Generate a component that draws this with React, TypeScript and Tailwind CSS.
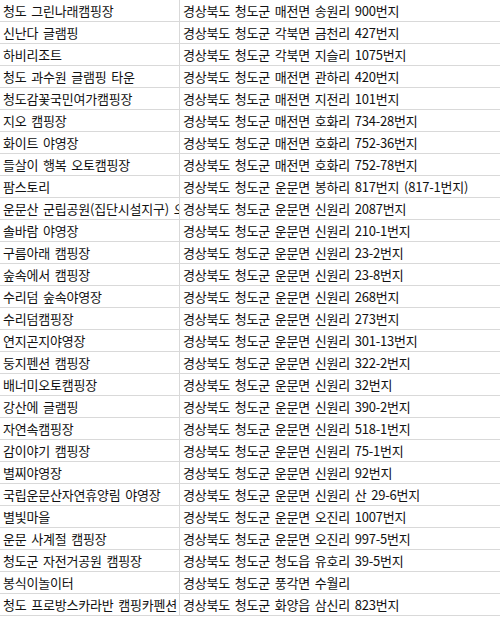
import React from "react";

const rows: [string, string][] = [
  ["청도 그린나래캠핑장", "경상북도 청도군 매전면 송원리 900번지"],
  ["신난다 글램핑", "경상북도 청도군 각북면 금천리 427번지"],
  ["하비리조트", "경상북도 청도군 각북면 지슬리 1075번지"],
  ["청도 과수원 글램핑 타운", "경상북도 청도군 매전면 관하리 420번지"],
  ["청도감꽃국민여가캠핑장", "경상북도 청도군 매전면 지전리 101번지"],
  ["지오 캠핑장", "경상북도 청도군 매전면 호화리 734-28번지"],
  ["화이트 야영장", "경상북도 청도군 매전면 호화리 752-36번지"],
  ["들살이 행복 오토캠핑장", "경상북도 청도군 매전면 호화리 752-78번지"],
  ["팜스토리", "경상북도 청도군 운문면 봉하리 817번지 (817-1번지)"],
  ["운문산 군립공원(집단시설지구) 오토캠핑장", "경상북도 청도군 운문면 신원리 2087번지"],
  ["솔바람 야영장", "경상북도 청도군 운문면 신원리 210-1번지"],
  ["구름아래 캠핑장", "경상북도 청도군 운문면 신원리 23-2번지"],
  ["숲속에서 캠핑장", "경상북도 청도군 운문면 신원리 23-8번지"],
  ["수리덤 숲속야영장", "경상북도 청도군 운문면 신원리 268번지"],
  ["수리덤캠핑장", "경상북도 청도군 운문면 신원리 273번지"],
  ["연지곤지야영장", "경상북도 청도군 운문면 신원리 301-13번지"],
  ["둥지펜션 캠핑장", "경상북도 청도군 운문면 신원리 322-2번지"],
  ["배너미오토캠핑장", "경상북도 청도군 운문면 신원리 32번지"],
  ["강산에 글램핑", "경상북도 청도군 운문면 신원리 390-2번지"],
  ["자연속캠핑장", "경상북도 청도군 운문면 신원리 518-1번지"],
  ["감이야기 캠핑장", "경상북도 청도군 운문면 신원리 75-1번지"],
  ["별찌야영장", "경상북도 청도군 운문면 신원리 92번지"],
  ["국립운문산자연휴양림 야영장", "경상북도 청도군 운문면 신원리 산 29-6번지"],
  ["별빛마을", "경상북도 청도군 운문면 오진리 1007번지"],
  ["운문 사계절 캠핑장", "경상북도 청도군 운문면 오진리 997-5번지"],
  ["청도군 자전거공원 캠핑장", "경상북도 청도군 청도읍 유호리 39-5번지"],
  ["봉식이놀이터", "경상북도 청도군 풍각면 수월리"],
  ["청도 프로방스카라반 캠핑카펜션", "경상북도 청도군 화양읍 삼신리 823번지"],
];

const cell =
  "h-[22px] border-b border-[#d9d9d9] px-[3px] leading-[21px] whitespace-nowrap overflow-hidden";

export default function App() {
  return (
    <div
      className="w-[500px] h-[617px] overflow-hidden bg-white text-[#111] text-[13px] tracking-[-0.2px] [word-spacing:2px]"
      style={{ fontFamily: '"Noto Sans CJK KR", "Noto Sans", sans-serif' }}
    >
      <div className="grid grid-cols-[180px_1fr]">
        {rows.map(([name, addr], i) => (
          <React.Fragment key={i}>
            <div className={`${cell} border-r`}>{name}</div>
            <div className={cell}>{addr}</div>
          </React.Fragment>
        ))}
      </div>
    </div>
  );
}
